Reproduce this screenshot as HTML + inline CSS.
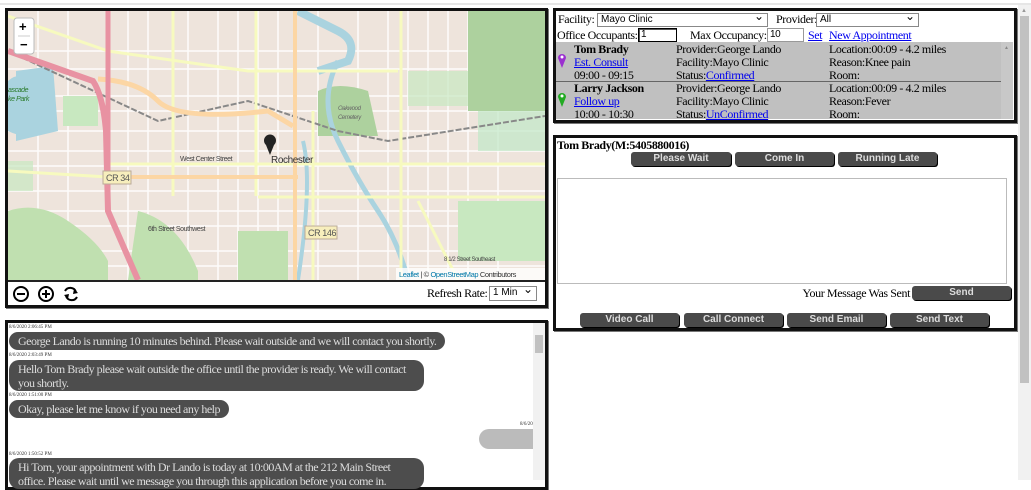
<!DOCTYPE html>
<html><head><style>
*{box-sizing:border-box}
body{margin:0;width:1031px;height:480px;overflow:hidden;background:#fff;font-family:"Liberation Serif",serif;font-size:12px;letter-spacing:-0.4px;position:relative}
.abs{position:absolute;white-space:nowrap}
.box{position:absolute;border:3px solid #111;box-shadow:1px 1px 0 #777}
a{color:#00e;text-decoration:underline}
.btn{position:absolute;height:14px;background:#4a4a4a;color:#ddd;font:bold 10px "Liberation Sans",sans-serif;letter-spacing:0;text-align:center;line-height:14px;border-radius:3px;box-shadow:1px 1px 0 #000}
.sel{position:absolute;height:14px;border:1px solid #888;background:#fff;font:10px "Liberation Sans",sans-serif;letter-spacing:0;padding-left:3px;line-height:12px}
.sel:after{content:"⌄";position:absolute;right:3px;top:-4px;font-size:12px}
.bub{position:absolute;left:9px;background:#4d4d4d;color:#ddd;border-radius:10px;padding:2px 9px;font-size:12px;line-height:14px;letter-spacing:-0.5px}
.ts{position:absolute;left:9px;font-size:5px;color:#333;letter-spacing:0}
</style></head><body>
<div class="abs" style="left:0;top:3px;width:1031px;height:2px;background:#e6e6e6"></div>
<div class="abs" style="left:1018px;top:5px;width:13px;height:475px;background:#f1f1f1"></div>
<div class="abs" style="left:1020px;top:16px;width:9px;height:367px;background:#c1c1c1"></div>
<div class="abs" style="left:1021px;top:8px;font-size:6px;color:#999">▲</div>

<!-- MAP PANEL -->
<div class="box" style="left:5px;top:8px;width:543px;height:300px"></div>
<svg class="abs" style="left:8px;top:11px" width="537" height="269" viewBox="0 0 537 269">
<rect width="537" height="269" fill="#eee4dc"/>
<g stroke="#fff" stroke-width="1.5" opacity=".9">
<path d="M0 40H537M0 58H537M0 85H537M0 100H537M0 120H537M0 140H537M0 155H537M0 180H537M0 200H537M0 215H537M0 240H537M0 255H537"/>
<path d="M30 0V269M60 0V269M120 0V269M140 0V269M180 0V269M210 0V269M230 0V269M250 0V269M270 0V269M310 0V269M350 0V269M380 0V269M400 0V269M420 0V269M440 0V269M460 0V269M490 0V269"/>
</g>
<path d="M8 60L45 55 50 120 8 130Z" fill="#aad3df"/>
<path d="M0 70Q10 60 30 68L40 120Q20 130 0 120Z" fill="#aad3df"/>
<path d="M55 85h35v30h-35z" fill="#c8e8c0"/>
<path d="M0 150h25v30H0z" fill="#c8e8c0" opacity=".7"/>
<path d="M0 200q30-10 60 10t40 40v19H0z" fill="#c0e0b0"/>
<path d="M130 200q40 10 60 60v9h-70z" fill="#c0e0b0"/>
<path d="M230 220h50v49h-50z" fill="#c0e0b0"/>
<path d="M310 80q20-10 50 0l10 45h-60z" fill="#add19e"/>
<path d="M460 0h77v100h-77z" fill="#add19e"/>
<path d="M470 100h67v40h-67z" fill="#c0e8c8" opacity=".7"/>
<path d="M400 60h60v35h-60z" fill="#c8e8c0" opacity=".7"/>
<path d="M450 190h87v60h-87z" fill="#c8e8c0"/>
<path d="M290 0q20 10 40 20t10 30l-30 10" fill="none" stroke="#aad3df" stroke-width="8"/>
<path d="M330 50q-20 40 0 80t40 70 30 69" fill="none" stroke="#aad3df" stroke-width="5"/>
<path d="M295 130q10 40-5 139" fill="none" stroke="#aad3df" stroke-width="4"/>
<path d="M0 40L150 110 240 90 330 120 380 130 537 105" fill="none" stroke="#888" stroke-width="2" stroke-dasharray="6 2"/>
<path d="M100 153H537M250 186H537M0 160L100 166" fill="none" stroke="#f7fabf" stroke-width="3"/>
<path d="M0 5L100 40 240 60H390M165 0V185M248 0V185M393 0V269M305 100V269M410 190L450 269" fill="none" stroke="#f7fabf" stroke-width="3"/>
<path d="M100 166H290" stroke="#fcd6a4" stroke-width="4"/>
<path d="M90 68Q130 70 150 90T260 100L285 115" fill="none" stroke="#fcd6a4" stroke-width="5"/>
<path d="M287 0V269" stroke="#fcd6a4" stroke-width="4"/>
<path d="M0 40L85 70Q95 85 98 120L100 200 130 269" fill="none" stroke="#e892a2" stroke-width="6"/>
<path d="M100 0V200" stroke="#e892a2" stroke-width="5"/>
<rect x="95" y="160" width="28" height="13" fill="#f7eebc" stroke="#ba9"/><text x="98" y="170" font-family="Liberation Sans" font-size="9" fill="#555">CR 34</text>
<rect x="297" y="215" width="32" height="13" fill="#f7eebc" stroke="#ba9"/><text x="300" y="225" font-family="Liberation Sans" font-size="9" fill="#555">CR 146</text>
<text x="172" y="150" font-family="Liberation Sans" font-size="7" fill="#444">West Center Street</text>
<text x="140" y="220" font-family="Liberation Sans" font-size="7" fill="#444">6th Street Southwest</text>
<text x="436" y="250" font-family="Liberation Sans" font-size="6" fill="#444">8 1/2 Street Southeast</text>
<text x="263" y="152" font-family="Liberation Sans" font-size="10" fill="#333">Rochester</text>
<text x="330" y="99" font-family="Liberation Sans" font-size="6" font-style="italic" fill="#666">Oakwood</text>
<text x="330" y="108" font-family="Liberation Sans" font-size="6" font-style="italic" fill="#666">Cemetery</text>
<text x="0" y="81" font-family="Liberation Sans" font-size="7" font-style="italic" fill="#2a7a2a">ascade</text>
<text x="0" y="90" font-family="Liberation Sans" font-size="7" font-style="italic" fill="#2a7a2a">ke Park</text>
<path d="M262 144l-4-10a6 6 0 1 1 8 0z" fill="#222"/>
<rect x="6" y="7" width="20" height="36" rx="3" fill="#fff" stroke="#bbb"/>
<path d="M10 25H22" stroke="#ccc"/>
<text x="11" y="20" font-family="Liberation Sans" font-size="13" font-weight="bold" fill="#000">+</text>
<text x="12" y="38" font-family="Liberation Sans" font-size="13" font-weight="bold" fill="#000">−</text>
<rect x="388" y="257" width="149" height="12" fill="#fff" opacity=".8"/>
<text x="391" y="266" font-family="Liberation Sans" font-size="7.5" fill="#333"><tspan fill="#0078a8">Leaflet</tspan> | © <tspan fill="#0078a8">OpenStreetMap</tspan> Contributors</text>
</svg>
<div class="abs" style="left:8px;top:280px;width:537px;height:2px;background:#222"></div>
<svg class="abs" style="left:13px;top:285px" width="70" height="18">
<g fill="none" stroke="#000" stroke-width="2"><circle cx="8" cy="9" r="7"/><path d="M4 9h8"/><circle cx="33" cy="9" r="7"/><path d="M29 9h8M33 5v8"/>
<path d="M52 6a6 6 0 0 1 11 1M64 12a6 6 0 0 1-11-1"/></g>
<path d="M61 4l4 4-5 1zM55 14l-4-4 5-1z" fill="#000"/>
</svg>
<div class="abs" style="left:427px;top:286px">Refresh Rate:</div>
<div class="sel" style="left:489px;top:286px;width:48px;height:15px">1 Min</div>

<!-- CHAT PANEL -->
<div class="box" style="left:5px;top:320px;width:543px;height:170px"></div>
<div class="abs" style="left:533px;top:323px;width:12px;height:157px;background:#f1f1f1"></div>
<div class="abs" style="left:535px;top:335px;width:8px;height:18px;background:#c1c1c1"></div>
<div class="ts" style="top:325px">8/6/2020 2:06:45 PM</div>
<div class="bub" style="top:332px;white-space:nowrap">George Lando is running 10 minutes behind. Please wait outside and we will contact you shortly.</div>
<div class="ts" style="top:353px">8/6/2020 2:03:49 PM</div>
<div class="bub" style="top:360px;width:415px;height:31px">Hello Tom Brady please wait outside the office until the provider is ready. We will contact you shortly.</div>
<div class="ts" style="top:393px">8/6/2020 1:51:00 PM</div>
<div class="bub" style="top:400px;white-space:nowrap">Okay, please let me know if you need any help</div>
<div class="ts" style="left:520px;top:422px">8/6/20</div>
<div class="abs" style="left:479px;top:429px;width:54px;height:20px;background:#bbb;border-radius:10px 0 0 10px"></div>
<div class="ts" style="top:452px">8/6/2020 1:50:52 PM</div>
<div class="bub" style="top:458px;width:415px;height:31px">Hi Tom, your appointment with Dr Lando is today at 10:00AM at the 212 Main Street office. Please wait until we message you through this application before you come in.</div>

<!-- TOP RIGHT -->
<div class="box" style="left:553px;top:8px;width:464px;height:115px"></div>
<div class="abs" style="left:558px;top:12px">Facility:</div>
<div class="sel" style="left:597px;top:13px;width:171px">Mayo Clinic</div>
<div class="abs" style="left:776px;top:12px">Provider:</div>
<div class="sel" style="left:816px;top:13px;width:103px">All</div>
<div class="abs" style="left:557px;top:28px">Office Occupants:</div>
<div class="abs" style="left:638px;top:28px;width:39px;height:14px;border:1px solid #000;box-shadow:inset 1px 1px 0 #555;font:10px 'Liberation Sans';padding-left:2px">1</div>
<div class="abs" style="left:690px;top:28px">Max Occupancy:</div>
<div class="abs" style="left:767px;top:28px;width:37px;height:14px;border:1px solid #999;font:10px 'Liberation Sans';padding-left:2px">10</div>
<a class="abs" style="left:808px;top:28px">Set</a>
<a class="abs" style="left:829px;top:28px">New Appointment</a>
<div class="abs" style="left:556px;top:42px;width:457px;height:77px;background:#c0c0c0"></div>
<div class="abs" style="left:556px;top:81px;width:445px;height:1px;background:#666"></div>
<div class="abs" style="left:1001px;top:42px;width:12px;height:77px;background:#c8c8c8;font-size:5px;color:#888;padding:4px 3px">▲</div>
<svg class="abs" style="left:557px;top:51px" width="10" height="66"><path d="M5 17L1 7a4 4 0 1 1 8 0z" fill="#9b30d0"/><circle cx="5" cy="6" r="1.5" fill="#fff"/><path d="M5 56L1 46a4 4 0 1 1 8 0z" fill="#2a2"/><circle cx="5" cy="45" r="1.5" fill="#fff"/></svg>
<div class="abs" style="left:574px;top:43px;line-height:13px"><b>Tom Brady</b><br><a>Est. Consult</a><br>09:00 - 09:15</div>
<div class="abs" style="left:676px;top:43px;line-height:13px">Provider:George Lando<br>Facility:Mayo Clinic<br>Status:<a>Confirmed</a></div>
<div class="abs" style="left:829px;top:43px;line-height:13px">Location:00:09 - 4.2 miles<br>Reason:Knee pain<br>Room:</div>
<div class="abs" style="left:574px;top:82px;line-height:13px"><b>Larry Jackson</b><br><a>Follow up</a><br>10:00 - 10:30</div>
<div class="abs" style="left:676px;top:82px;line-height:13px">Provider:George Lando<br>Facility:Mayo Clinic<br>Status:<a>UnConfirmed</a></div>
<div class="abs" style="left:829px;top:82px;line-height:13px">Location:00:09 - 4.2 miles<br>Reason:Fever<br>Room:</div>

<!-- MESSAGE PANEL -->
<div class="box" style="left:553px;top:135px;width:464px;height:196px"></div>
<div class="abs" style="left:557px;top:138px"><b>Tom Brady(M:5405880016)</b></div>
<div class="btn" style="left:631px;top:152px;width:100px">Please Wait</div>
<div class="btn" style="left:735px;top:152px;width:99px">Come In</div>
<div class="btn" style="left:838px;top:152px;width:99px">Running Late</div>
<div class="abs" style="left:557px;top:178px;width:450px;height:106px;border:1px solid #bbb"></div>
<div class="abs" style="right:121px;top:286px">Your Message Was Sent</div>
<div class="btn" style="left:912px;top:286px;width:99px">Send</div>
<div class="btn" style="left:580px;top:313px;width:99px">Video Call</div>
<div class="btn" style="left:684px;top:313px;width:99px">Call Connect</div>
<div class="btn" style="left:787px;top:313px;width:99px">Send Email</div>
<div class="btn" style="left:890px;top:313px;width:99px">Send Text</div>
</body></html>
